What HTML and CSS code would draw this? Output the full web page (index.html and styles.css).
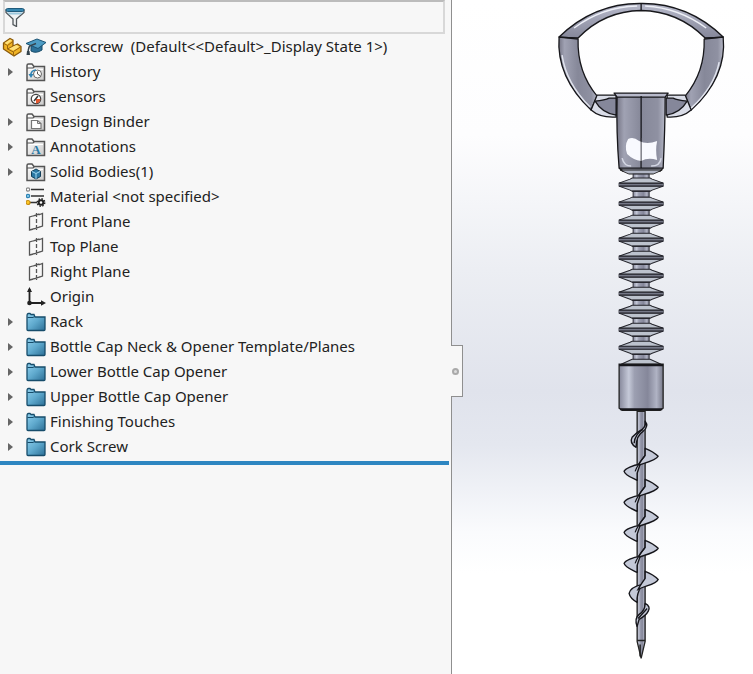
FILE: index.html
```html
<!DOCTYPE html>
<html lang="en">
<head>
<meta charset="utf-8">
<title>Corkscrew</title>
<link rel="stylesheet" href="styles.css">
</head>
<body>
<svg class="defs" aria-hidden="true">
  <defs>
    <linearGradient id="blueFill" x1="0" y1="0" x2="1" y2="1"><stop offset="0" stop-color="#8fd0ee"/><stop offset=".5" stop-color="#5fa9cd"/><stop offset="1" stop-color="#2c6f96"/></linearGradient>
    <linearGradient id="greyFill" x1="0" y1="0" x2="1" y2="1"><stop offset="0" stop-color="#fff"/><stop offset="1" stop-color="#c9c9c9"/></linearGradient>
    <symbol id="folder" viewBox="0 0 20 20">
      <path d="M1 4V17.500q0 1 1 1h16q1 0 1-1V5H9L8 2.500H5L4 1.500H2.500Q1 1.500 1 4Z" fill="url(#blueFill)" stroke="#174d6b" stroke-width="1.300"/>
      <path d="M1.500 5.500H7L8.500 4.500" fill="none" stroke="#174d6b"/>
    </symbol>
    <symbol id="frame" viewBox="0 0 20 20">
      <path d="M1 18.500V3.500Q1 2 2.500 2H6l2 2.500h10.500V18.500Z" fill="url(#greyFill)" stroke="#555" stroke-width="1.500"/>
      <path d="M1 6h6l1.500-1.500" fill="none" stroke="#555" stroke-width="1.200"/>
      <path d="M3 7.500h14" stroke="#fff"/>
    </symbol>
    <symbol id="plane" viewBox="0 0 20 20">
      <path d="M8.500 3.500 3.500 5v13l5-1.500M12.500 3l4-1.500V14l-4 1.300M3.500 18l4-1M10.500 1v4M10.500 7v4M10.500 13v5M7.500 3.800l6-2M8 16.800l6-2" fill="none" stroke="#555" stroke-width="1.300"/>
    </symbol>
  </defs>
</svg>
<div class="app">
  <aside class="panel">
    <label class="filter">
      <svg class="icon" viewBox="0 0 20 20" aria-hidden="true">
        <path d="M1 3v2.500l7 6.500v5.500l3.500 2V12L19 5.500V3Z" fill="#f1f3f4" stroke="#50565a" stroke-width="1.300"/>
        <path d="M2 5.500 4 7.500h12l2-2Z" fill="#9bc8dd"/>
        <rect x="1" y="1.500" width="18" height="3" rx="1.500" fill="#3687b0" stroke="#205b7c"/>
      </svg>
      <input type="text" aria-label="Filter">
    </label>
    <ul class="tree">
      <li class="row root">
        <svg class="icon" viewBox="0 0 20 20" aria-hidden="true">
          <path d="M1.500 6 8 1.500l3 1.500v6l4.500-2 3.500 2.500v5L12 19 1.500 12Z" fill="#f0b325" stroke="#8a5a0c" stroke-width="1.300" stroke-linejoin="round"/>
          <path d="M2.500 6 8 2.500l2 1L5 7.500ZM6.500 11.500 14.500 8l3 2-6 3.500Z" fill="#ffe27a"/>
          <path d="m2 6.500 3.500 2v3.500l6 3V19M5.500 8.500 11 4.500M11.500 14.500l7-4.500M5.500 12l5.500-3" fill="none" stroke="#9a660d"/>
        </svg>
        <svg class="icon" viewBox="0 0 20 20" aria-hidden="true">
          <path d="M5 8v6q5 3 11-1V8Z" fill="#2c7098" stroke="#174d6b"/>
          <path d="M0 6.500 11 2l9 3.500-8 6Z" fill="#4d9cc4" stroke="#1b5373"/>
          <path d="M10 6.500 3.500 9Q2 12 2 18" fill="none" stroke="#35444d" stroke-width="1.500"/>
          <path d="M1 14h2.500l.5 4H.500Z" fill="#35444d"/>
        </svg>
        <span class="name">Corkscrew&nbsp; (Default&lt;&lt;Default&gt;_Display State 1&gt;)</span>
      </li>
      <li class="row"><button class="arrow" aria-label="Expand History"></button>
        <svg class="icon" viewBox="0 0 20 20" aria-hidden="true"><use href="#frame"/><circle cx="11.500" cy="12" r="4" fill="#fff" stroke="#666"/><path d="M11.500 9.500V12l3 2" fill="none" stroke="#555"/><path d="M4.500 14Q5 8 10 8" fill="none" stroke="#2e83b4" stroke-width="1.500"/><path d="M2.500 12H7.500L5 16Z" fill="#2e83b4"/></svg>
        <span class="name">History</span></li>
      <li class="row"><span class="arrow-space"></span>
        <svg class="icon" viewBox="0 0 20 20" aria-hidden="true"><use href="#frame"/><circle cx="10" cy="12" r="4.700" fill="#fff" stroke="#444" stroke-width="1.300"/><path d="M10 12h4.500Q14 16 10 16.500Z" fill="#e4572e"/><path d="m8 14 4-5" stroke="#333" stroke-width="1.500"/></svg>
        <span class="name">Sensors</span></li>
      <li class="row"><button class="arrow" aria-label="Expand Design Binder"></button>
        <svg class="icon" viewBox="0 0 20 20" aria-hidden="true"><use href="#frame"/><path d="M5.500 8.500h6l3.500 3v5H5.500Z" fill="#fff" stroke="#777" stroke-width="1.200"/><path d="M11.500 8.500v3H15" fill="none" stroke="#777"/></svg>
        <span class="name">Design Binder</span></li>
      <li class="row"><button class="arrow" aria-label="Expand Annotations"></button>
        <svg class="icon" viewBox="0 0 20 20" aria-hidden="true"><use href="#frame"/><text x="10" y="17" text-anchor="middle" class="glyph">A</text></svg>
        <span class="name">Annotations</span></li>
      <li class="row"><button class="arrow" aria-label="Expand Solid Bodies"></button>
        <svg class="icon" viewBox="0 0 20 20" aria-hidden="true"><use href="#frame"/><path d="m10 7 4.500 2.500v5L10 17l-4.500-2.500v-5Z" fill="#2a78a4" stroke="#123f5a"/><path d="m6 9.500 4 2 4-2M10 11.500V17" fill="none" stroke="#a3d8f2"/></svg>
        <span class="name">Solid Bodies(1)</span></li>
      <li class="row"><span class="arrow-space"></span>
        <svg class="icon" viewBox="0 0 20 20" aria-hidden="true"><path d="M5 2.500h13M5 9h13M4 15.500h7" stroke="#333" stroke-width="1.700"/><g stroke-width="1.200"><circle cx="2" cy="2.500" r="1.700" fill="#fff" stroke="#888"/><circle cx="2" cy="9" r="1.700" fill="#8fd0ee" stroke="#2e83b4"/><circle cx="2" cy="15.500" r="2" fill="#ffc928" stroke="#c58b10"/></g><circle cx="15" cy="15.500" r="3.700" fill="none" stroke="#222" stroke-width="1.500" stroke-dasharray="1.500 1.400"/><circle cx="15" cy="15.500" r="2.300" fill="#fff" stroke="#222" stroke-width="2"/></svg>
        <span class="name">Material &lt;not specified&gt;</span></li>
      <li class="row"><span class="arrow-space"></span><svg class="icon" aria-hidden="true"><use href="#plane"/></svg><span class="name">Front Plane</span></li>
      <li class="row"><span class="arrow-space"></span><svg class="icon" aria-hidden="true"><use href="#plane"/></svg><span class="name">Top Plane</span></li>
      <li class="row"><span class="arrow-space"></span><svg class="icon" aria-hidden="true"><use href="#plane"/></svg><span class="name">Right Plane</span></li>
      <li class="row"><span class="arrow-space"></span>
        <svg class="icon" viewBox="0 0 20 20" aria-hidden="true"><path d="M3.500 16.500V2M3.500 16h14" fill="none" stroke="#222" stroke-width="1.800"/><path d="m3.500 0 2.500 5H1ZM20 16l-5-2.700v5.400Z" fill="#222"/><circle cx="3.500" cy="16" r="2.300" fill="#222"/></svg>
        <span class="name">Origin</span></li>
      <li class="row"><button class="arrow" aria-label="Expand Rack"></button><svg class="icon" aria-hidden="true"><use href="#folder"/></svg><span class="name">Rack</span></li>
      <li class="row"><button class="arrow" aria-label="Expand Bottle Cap Neck"></button><svg class="icon" aria-hidden="true"><use href="#folder"/></svg><span class="name">Bottle Cap Neck &amp; Opener Template/Planes</span></li>
      <li class="row"><button class="arrow" aria-label="Expand Lower Bottle Cap Opener"></button><svg class="icon" aria-hidden="true"><use href="#folder"/></svg><span class="name">Lower Bottle Cap Opener</span></li>
      <li class="row"><button class="arrow" aria-label="Expand Upper Bottle Cap Opener"></button><svg class="icon" aria-hidden="true"><use href="#folder"/></svg><span class="name">Upper Bottle Cap Opener</span></li>
      <li class="row"><button class="arrow" aria-label="Expand Finishing Touches"></button><svg class="icon" aria-hidden="true"><use href="#folder"/></svg><span class="name">Finishing Touches</span></li>
      <li class="row"><button class="arrow" aria-label="Expand Cork Screw"></button><svg class="icon" aria-hidden="true"><use href="#folder"/></svg><span class="name">Cork Screw</span></li>
    </ul>
    <div class="rollback"></div>
    <button class="collapse" aria-label="Collapse panel"><span class="dot"></span></button>
  </aside>
  <main class="viewport">
    <svg class="model" viewBox="452 0 301 674" role="img" aria-label="Corkscrew model">
      <defs>
        <linearGradient id="metal"><stop offset="0" stop-color="#777787"/><stop offset=".15" stop-color="#a0a2b3"/><stop offset=".5" stop-color="#868899"/><stop offset=".85" stop-color="#8f91a2"/><stop offset="1" stop-color="#b5b7c6"/></linearGradient>
        <linearGradient id="drum"><stop offset="0" stop-color="#85879a"/><stop offset=".22" stop-color="#c5c9d8"/><stop offset=".35" stop-color="#9c9fb1"/><stop offset=".65" stop-color="#85879a"/><stop offset=".85" stop-color="#b0b3c4"/><stop offset="1" stop-color="#777989"/></linearGradient>
        <linearGradient id="arch" x1="0" y1="0" x2="0" y2="1"><stop offset="0" stop-color="#b8bacb"/><stop offset="1" stop-color="#85879a"/></linearGradient>
        <g id="disc">
          <rect x="633" y="5" width="16" height="8" fill="url(#drum)" stroke="#33333c"/>
          <path d="M632-6h18l2 1 11 4v3l-11 4-2 1h-18l-2-1-11-4v-3l11-4Z" fill="#bcc2cd" stroke="#26262d"/>
          <path d="M619-1h44v3h-44Z" fill="#747786"/>
          <path d="M619-1h44M619 2h44" stroke="#1a1a20" stroke-width="1.200"/>
          <path d="M632 7h18" stroke="#25252c" stroke-width="1.400"/>
        </g>
        <g id="turn" stroke="#15151a" stroke-width="1.400" stroke-linejoin="round">
          <path d="M645-8C650-6 655-3 658 0C656 4 647 6 638 9C640 5 643 2 645-1Z" fill="#c4c9d8"/>
          <path d="M640 8C633 9 625 12 624 15C625 19 631 21 637 24V17C638 14 639 11 640 8Z" fill="#c4c9d8"/>
          <path d="M645-1C641 4 637 9 635 15" fill="none" stroke-width="1.200"/>
        </g>
      </defs>
      <g stroke="#17171b" stroke-width="1.300" stroke-linejoin="round">
        <path d="M559 37Q594 3 641 3.500Q688 3 723 37L705 38Q678 11 641 10.500Q604 11 578 38Z" fill="url(#arch)"/>
        <path d="M559 37 578 39Q577 72 597 96L591 110Q556 77 559 37Z" fill="url(#metal)"/>
        <path d="M723 37 704 39Q705 72 685 96L691 110Q727 77 723 37Z" fill="url(#metal)"/>
        <path d="M597 95H616V117Q600 118 591 110Z" fill="#d9dce7"/>
        <path d="M685 95H667V117Q682 118 691 110Z" fill="#d9dce7"/>
        <path d="M616 98V115Q602 113 595 101Q605 100 609 98Z" fill="#85879a"/>
        <path d="M666 98V115Q680 113 687 101Q677 100 673 98Z" fill="#85879a"/>
        <path d="M617 96h48q0 31-2 72l-3 3h-37l-4-3Q616 131 617 96Z" fill="url(#metal)"/>
        <path d="M614 93h54l-3 4h-48Z" fill="#b8bacb"/>
        <path d="M619 168h44M641 96v72M641 3.500v7M578 38l-19-1M704 38l19-1" fill="none"/>
      </g>
      <path d="M574 28Q602 7 637 6M645 6Q679 8 706 28" fill="none" stroke="#eef0f7" stroke-width="1.500"/>
      <path d="M562 55Q566 83 590 107M719 62Q714 87 691 108" fill="none" stroke="#e0e3ed" stroke-width="1.500"/>
      <path d="M628 139q5-3 11 2 8 4 18 0-2 9 0 19-9-3-16 1-8-1-14-7-3-8 1-15Z" fill="#f8f9fe"/>
      <path d="M622 158q2 8 9 8M651 166q9 0 10-8" fill="none" stroke="#d4d7e4" stroke-width="1.500"/>
      <path d="M641 138v29" stroke="#43434c"/>
      <path d="M620 170h42l-9 4h-24Z" fill="#b1b6c5" stroke="#222"/>
      <rect x="633" y="174" width="16" height="5" fill="url(#drum)" stroke="#33333c"/>
      <use href="#disc" y="184"/><use href="#disc" y="203"/><use href="#disc" y="221"/><use href="#disc" y="239"/><use href="#disc" y="257"/><use href="#disc" y="275"/><use href="#disc" y="293"/><use href="#disc" y="311"/><use href="#disc" y="329"/><use href="#disc" y="347"/>
      <path d="M632 359h18l11 5h-40Z" fill="#bcc2cd" stroke="#26262d"/>
      <path d="M619 364h44v44l-3 2h-38l-3-2Z" fill="url(#drum)" stroke="#222" stroke-width="1.300"/>
      <path d="M619 365h44M620 409h42" stroke="#16161b" stroke-width="2"/>
      <path d="M637 411h8v230l-4 17-4-17Z" fill="url(#drum)" stroke="#222" stroke-width="1.300"/>
      <path d="M637 640h8M640 644v12" stroke="#222" stroke-width="1.500"/>
      <g fill="#c4c9d8" stroke="#15151a" stroke-width="1.400" stroke-linejoin="round">
        <path d="M645 421q4 5-2 10-7 4-7 16-7-4-4-10 4-5 10-8 4-3 3-8Z"/>
        <path d="M643 429q-8 4-9 14" fill="none"/>
        <path d="M642 584q-12 3-13 9 1 5 8 9-1-8 5-18Z"/>
        <path d="M645 603q6 3 3 8-2 4-9 8l-2 7q-3-8 2-12 6-4 6-11Z"/>
        <path d="m647 608-9 10" fill="none"/>
      </g>
      <use href="#turn" y="456"/><use href="#turn" y="487"/><use href="#turn" y="517"/><use href="#turn" y="548"/>
      <path d="M645 571C650 573 655 576 658 579C656 584 646 585 638 589C640 585 643 581 645 578Z" fill="#c4c9d8" stroke="#15151a" stroke-width="1.400"/>
    </svg>
  </main>
</div>
</body>
</html>
```
FILE: styles.css
```css
* { box-sizing: border-box; }
body { margin: 0; font: 15px/25px "Noto Sans", "Open Sans", sans-serif; color: #222; }
.defs { position: absolute; width: 0; height: 0; }
.app { display: flex; min-height: 100vh; }
.panel { position: relative; flex: 0 0 60%; background: #f7f7f7; border-right: 1px solid #8f8f8f; }
.filter { display: flex; align-items: center; height: 34px; margin: 0 6px 0 3px; border: 2px solid #d8d8d8; border-top-color: #bcbcbc; }
.filter input { flex: 1; min-width: 0; border: 0; background: transparent; font: inherit; outline: 0; }
.icon { flex: none; width: 20px; height: 20px; }
.tree { list-style: none; margin: 0; padding: 0; }
.row { display: flex; align-items: center; height: 25px; padding-left: 6px; white-space: nowrap; }
.root { padding-left: 2px; gap: 4px; }
.arrow, .arrow-space { flex: none; width: 20px; height: 20px; padding: 0; border: 0; background: none; }
.arrow { display: flex; align-items: center; }
.arrow::before { content: ""; margin-left: 2px; border-left: 5px solid #666; border-top: 4px solid transparent; border-bottom: 4px solid transparent; }
.name { margin-left: 4px; }
.root .name { margin-left: 0; }
.glyph { font: bold 13px "Liberation Serif", serif; fill: #2878a5; }
.rollback { height: 4px; margin: 2px 2px 0 0; background: #2e86c1; }
.collapse { position: absolute; left: 100%; top: 345px; width: 12px; height: 52px; padding: 0; border: 1px solid #8f8f8f; border-left: 0; background: #f7f7f7; }
.dot { display: block; width: 7px; height: 7px; margin-left: 1px; border: 2px solid #aaa; border-radius: 50%; background: #ddd; }
.viewport { flex: 1; min-width: 0; background: linear-gradient(#fff 0, #fdfdfe 20%, #eceef3 40%, #e0e3ec 58%, #e4e7ef 66%, #fafbfd 79%, #fff 85%); }
.model { display: block; width: 100%; height: auto; }
```
